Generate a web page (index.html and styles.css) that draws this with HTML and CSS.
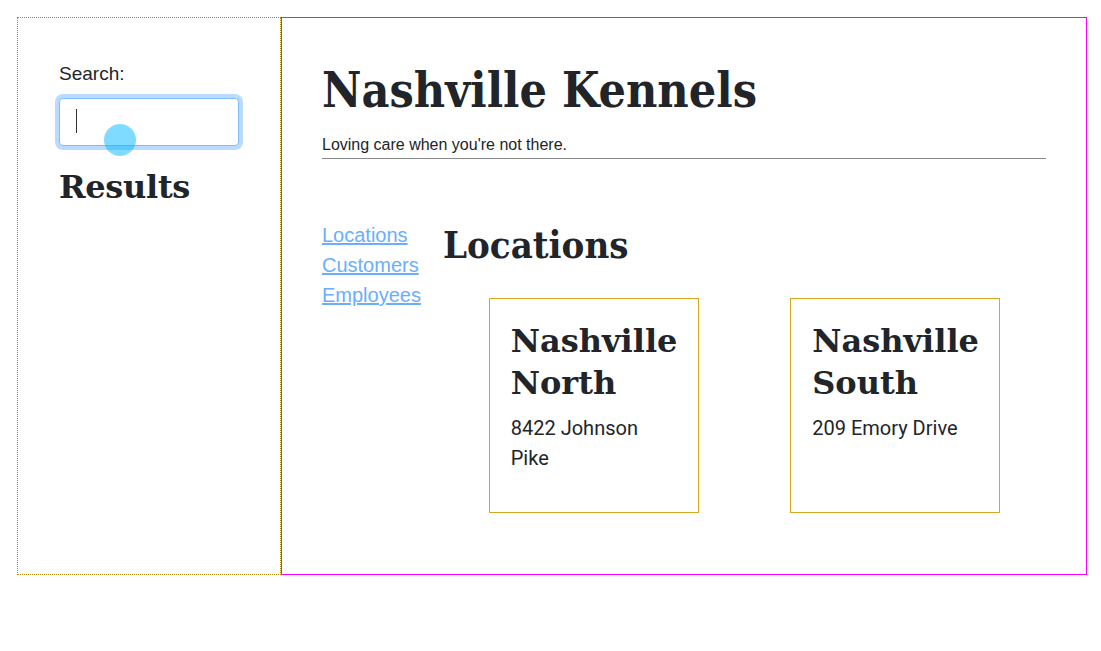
FILE: index.html
```html
<!DOCTYPE html>
<html lang="en">
<head>
<meta charset="utf-8">
<title>Nashville Kennels</title>
<link rel="stylesheet" href="styles.css">
</head>
<body>
<div class="app">
  <aside class="sidebar">
    <label class="search-label" for="search">Search:</label>
    <div class="search-wrap">
      <input id="search" class="search-input" type="text">
      <span class="caret"></span>
      <span class="click-dot"></span>
    </div>
    <h2 class="results-title">Results</h2>
  </aside>
  <main class="main">
    <header class="header">
      <h1 class="title">Nashville Kennels</h1>
      <div class="tagline">Loving care when you're not there.</div>
      <hr class="rule">
    </header>
    <div class="body-row">
      <nav class="nav">
        <a href="#" class="nav-link">Locations</a>
        <a href="#" class="nav-link">Customers</a>
        <a href="#" class="nav-link">Employees</a>
      </nav>
      <section class="content">
        <h2 class="section-title">Locations</h2>
        <div class="cards">
          <article class="card">
            <h3 class="card-title">Nashville North</h3>
            <div class="card-address">8422 Johnson Pike</div>
          </article>
          <article class="card">
            <h3 class="card-title">Nashville South</h3>
            <div class="card-address">209 Emory Drive</div>
          </article>
        </div>
      </section>
    </div>
  </main>
</div>
</body>
</html>
```
FILE: styles.css
```css
* { box-sizing: border-box; }
body {
  margin: 0;
  background: #fff;
  color: #212529;
  font-family: "Liberation Sans", Arial, sans-serif;
}
.app {
  display: flex;
  margin: 17px 0 0 17px;
  width: 1070px;
  height: 558px;
}
.sidebar {
  width: 264px;
  flex: none;
  border: 1px dotted #b8860b;
  padding: 46px 41px 0 41px;
}
.search-label {
  display: block;
  font-size: 19px;
  line-height: 20px;
  color: #212529;
}
.search-wrap {
  position: relative;
  margin-top: 14px;
  width: 180px;
  height: 48px;
}
.search-input {
  display: block;
  width: 180px;
  height: 48px;
  border: 1px solid #80bdff;
  border-radius: 4px;
  box-shadow: 0 0 0 4px rgba(0, 123, 255, 0.27);
  outline: none;
  padding: 0 12px;
  font-size: 18px;
  background: #fff;
}
.caret {
  position: absolute;
  left: 17px;
  top: 11px;
  width: 1px;
  height: 24px;
  background: #333;
}
.click-dot {
  position: absolute;
  left: 45px;
  top: 26px;
  width: 32px;
  height: 32px;
  border-radius: 50%;
  background: rgba(0, 183, 255, 0.5);
}
.results-title {
  margin: 21px 0 0 0;
  font-family: "DejaVu Serif", serif;
  font-weight: bold;
  font-size: 32px;
  line-height: 40px;
  color: #212529;
  letter-spacing: -0.3px;
}
.main {
  flex: 1;
  border: 1px solid #ff00ff;
  padding: 0 40px;
}
.title {
  margin: 44px 0 0 0;
  font-family: "DejaVu Serif", serif;
  font-stretch: condensed;
  font-weight: bold;
  font-size: 48px;
  line-height: 56px;
}
.tagline {
  margin-top: 17px;
  font-size: 16px;
  line-height: 20px;
}
.rule {
  margin: 3px 0 0 0;
  border: 0;
  border-top: 1px solid #8a8a8a;
  height: 0;
}
.body-row {
  display: flex;
  margin-top: 61px;
}
.nav {
  width: 121px;
  flex: none;
  display: flex;
  flex-direction: column;
  align-items: flex-start;
}
.nav-link {
  font-size: 20px;
  line-height: 30px;
  color: #69aeff;
  text-decoration: underline;
}
.content {
  flex: 1;
}
.section-title {
  margin: 2px 0 0 0;
  font-family: "DejaVu Serif", serif;
  font-stretch: condensed;
  font-weight: bold;
  font-size: 38px;
  line-height: 46px;
}
.cards {
  display: flex;
  justify-content: space-around;
  margin-top: 30px;
}
.card {
  width: 210px;
  height: 215px;
  border: 1px solid #daa520;
  padding: 21px;
}
.card-title {
  margin: 0;
  font-family: "DejaVu Serif", serif;
  font-weight: bold;
  font-size: 32px;
  line-height: 42px;
}
.card-address {
  margin-top: 9px;
  font-family: Roboto, "Noto Sans", sans-serif;
  font-size: 20px;
  line-height: 30px;
}
```
